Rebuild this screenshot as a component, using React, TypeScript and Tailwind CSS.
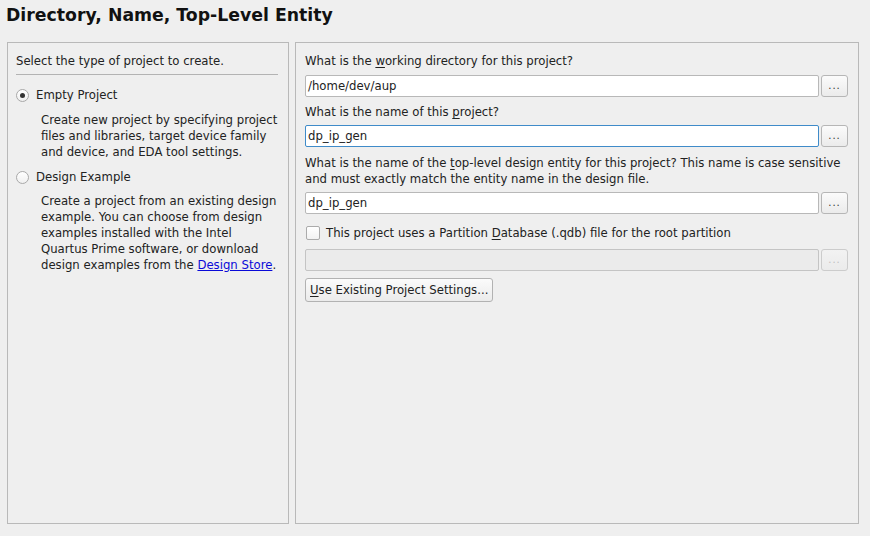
import React from "react";

function U({ children }: { children: React.ReactNode }) {
  return <span className="underline underline-offset-2">{children}</span>;
}

function Input({ value, focused, disabled }: { value?: string; focused?: boolean; disabled?: boolean }) {
  return (
    <div className="flex gap-[2px] h-[22px]">
      <div
        className={
          "flex-1 flex items-center pl-[2px] rounded-[2px] border " +
          (disabled
            ? "bg-[#ebebeb] border-[#c4c4c4]"
            : focused
            ? "bg-white border-[#3f8bc9]"
            : "bg-white border-[#b8b8b8]")
        }
      >
        {value}
      </div>
      <div
        className={
          "w-[27px] flex items-center justify-center rounded-[3px] border bg-gradient-to-b text-[10px] tracking-[1px] " +
          (disabled
            ? "from-[#f2f2f2] to-[#ebebeb] border-[#cccccc] text-[#c0c0c0]"
            : "from-[#fbfbfb] to-[#ebebeb] border-[#b6b6b6] text-[#333]")
        }
      >
        ...
      </div>
    </div>
  );
}

export default function App() {
  return (
    <div className="w-[870px] h-[536px] bg-[#efefef] text-[#222] text-[11.7px] leading-[16px] font-['DejaVu_Sans',sans-serif] flex flex-col">
      <div className="h-[42px] pl-[6px] pt-[4px] text-[17.3px] leading-[22px] font-bold text-[#111]">
        Directory, Name, Top-Level Entity
      </div>
      <div className="flex gap-[6px] pl-[7px] h-[482px]">
        <div className="w-[282px] border border-[#b9b9b9] pt-[10px] pl-[8px] pr-[10px] flex flex-col">
          <div>Select the type of project to create.</div>
          <div className="h-px bg-[#b3b3b3] mt-[5px]" />
          <div className="flex items-center mt-[12px] h-[16px]">
            <div className="w-[13px] h-[13px] rounded-full border border-[#a9a9a9] bg-gradient-to-b from-[#ffffff] to-[#f0f0f0] flex items-center justify-center">
              <div className="w-[5px] h-[5px] rounded-full bg-[#333]" />
            </div>
            <span className="ml-[7px]">Empty Project</span>
          </div>
          <div className="pl-[25px] mt-[9px]">
            Create new project by specifying project files and libraries, target device family and device, and EDA tool settings.
          </div>
          <div className="flex items-center mt-[9px] h-[16px]">
            <div className="w-[13px] h-[13px] rounded-full border border-[#a9a9a9] bg-gradient-to-b from-[#ffffff] to-[#f0f0f0]" />
            <span className="ml-[7px]">Design Example</span>
          </div>
          <div className="pl-[25px] mt-[8px]">
            Create a project from an existing design example. You can choose from design examples installed with the Intel Quartus Prime software, or download design examples from the{" "}
            <span className="text-[#0a0ad8] underline">Design Store</span>.
          </div>
        </div>
        <div className="w-[564px] border border-[#b9b9b9] pt-[10px] pl-[9px] pr-[10px] flex flex-col">
          <div>
            What is the <U>w</U>orking directory for this project?
          </div>
          <div className="mt-[6px]">
            <Input value="/home/dev/aup" />
          </div>
          <div className="mt-[7px]">
            What is the name of this <U>p</U>roject?
          </div>
          <div className="mt-[5px]">
            <Input value="dp_ip_gen" focused />
          </div>
          <div className="mt-[8px]">
            What is the name of the <U>t</U>op-level design entity for this project? This name is case sensitive and must exactly match the entity name in the design file.
          </div>
          <div className="mt-[5px]">
            <Input value="dp_ip_gen" />
          </div>
          <div className="flex items-center mt-[11px] h-[16px]">
            <div className="w-[14px] h-[14px] ml-px rounded-[2px] border border-[#ababab] bg-gradient-to-b from-[#ffffff] to-[#f2f2f2]" />
            <span className="ml-[6px]">
              This project uses a Partition <U>D</U>atabase (.qdb) file for the root partition
            </span>
          </div>
          <div className="mt-[8px]">
            <Input disabled />
          </div>
          <div className="mt-[7px] flex">
            <div className="h-[24px] px-[4px] flex items-center rounded-[3px] border border-[#b2b2b2] bg-gradient-to-b from-[#fbfbfb] to-[#ebebeb]">
              <U>U</U>se Existing Project Settings...
            </div>
          </div>
        </div>
      </div>
    </div>
  );
}
